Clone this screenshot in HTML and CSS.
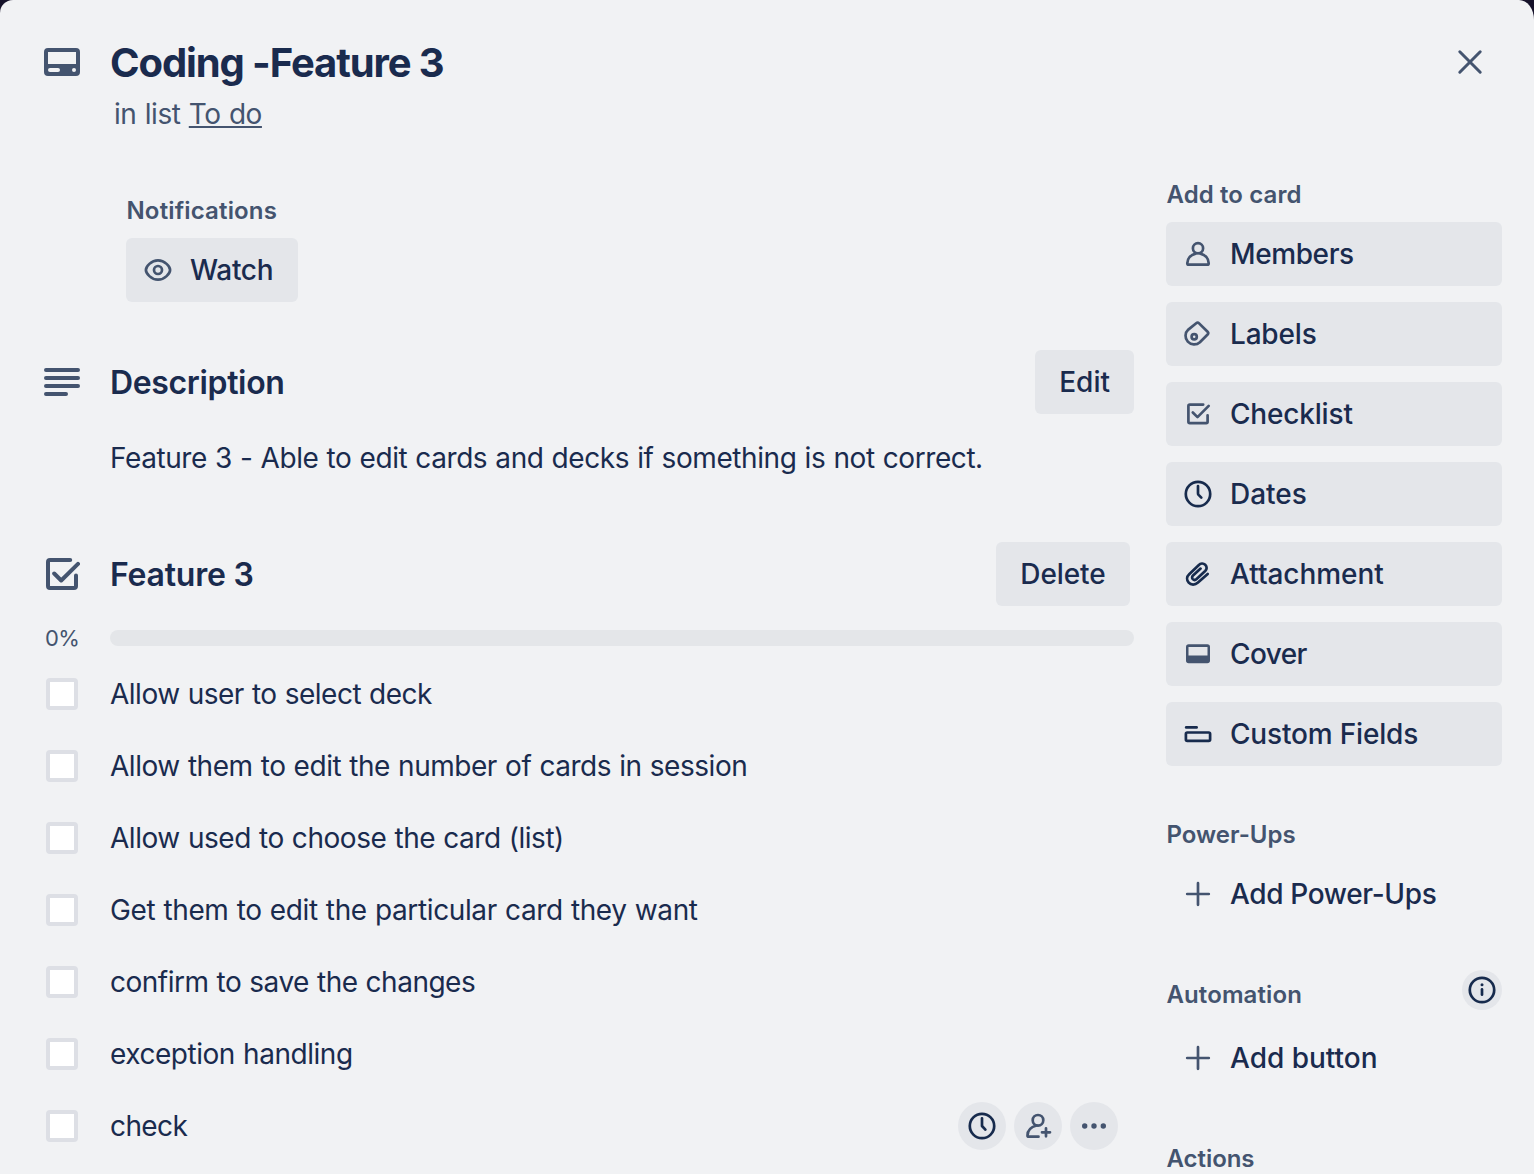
FILE: index.html
```html
<!DOCTYPE html>
<html lang="en">
<head>
<meta charset="utf-8">
<title>Coding -Feature 3</title>
<link rel="stylesheet" href="styles.css">
</head>
<body>
<main class="dialog">
  <header class="header">
    <svg class="head-icon" width="36" height="36" viewBox="0 0 36 36"><path fill="currentColor" fill-rule="evenodd" d="M4 4h28a4 4 0 0 1 4 4v20a4 4 0 0 1-4 4H4a4 4 0 0 1-4-4V8a4 4 0 0 1 4-4zM4 8v12h28V8zM6 24a2 2 0 0 0 0 4h8a2 2 0 0 0 0-4zM30 24a2 2 0 0 0 0 4a2 2 0 0 0 0-4z"/></svg>
    <div class="heading">
      <h1 class="title">Coding -Feature 3</h1>
      <p class="subtitle">in list <a class="list-link">To do</a></p>
    </div>
    <svg class="close" width="32" height="32" viewBox="0 0 32 32"><path class="s3" d="M5.800 5.800l20.400 20.400M26.200 5.800L5.800 26.200"/></svg>
  </header>

  <div class="columns">
    <div class="content">
      <section class="notifications">
        <h3 class="label">Notifications</h3>
        <button class="btn watch">
          <svg width="32" height="32" viewBox="0 0 32 32"><path class="s" d="M3.900 16C3.900 12.600 9.200 6.300 16 6.300S28.100 12.600 28.100 16S22.800 25.700 16 25.700S3.900 19.400 3.900 16z"/><circle class="s" cx="16" cy="16" r="4"/></svg>
          <span class="watch-text">Watch</span>
        </button>
      </section>

      <section class="section-head">
        <svg width="36" height="36" viewBox="0 0 36 36"><path class="s4" d="M2 6h32M2 14h32M2 22h32M2 30h20"/></svg>
        <h2 class="section-title description-title">Description</h2>
        <button class="btn">Edit</button>
      </section>
      <p class="description">Feature 3 - Able to edit cards and decks if something is not correct.</p>

      <section class="section-head checklist-head">
        <svg width="36" height="36" viewBox="0 0 36 36"><path class="s4" d="M26.200 4H6a2 2 0 0 0-2 2v24a2 2 0 0 0 2 2h24a2 2 0 0 0 2-2V19.500M10.200 17.500l7 7L34 7.800"/></svg>
        <h2 class="section-title">Feature 3</h2>
        <button class="btn delete">Delete</button>
      </section>
      <div class="progress"><span class="percent">0%</span><div class="track"></div></div>
      <ul class="items">
        <li class="item"><span class="box"></span><span class="t1">Allow user to select deck</span></li>
        <li class="item"><span class="box"></span><span>Allow them to edit the number of cards in session</span></li>
        <li class="item"><span class="box"></span><span>Allow used to choose the card (list)</span></li>
        <li class="item"><span class="box"></span><span class="t2">Get them to edit the particular card they want</span></li>
        <li class="item"><span class="box"></span><span class="t1">confirm to save the changes</span></li>
        <li class="item"><span class="box"></span><span>exception handling</span></li>
        <li class="item"><span class="box"></span><span class="t3">check</span>
          <div class="tools">
            <span class="tool dark"><svg width="32" height="32" viewBox="0 0 32 32"><circle class="s" cx="16" cy="16" r="12.200"/><path class="s" d="M16 8.300V16l3.400 3.600"/></svg></span>
            <span class="tool"><svg width="48" height="48" viewBox="0 0 48 48"><circle class="s" cx="24" cy="18.300" r="5.300"/><path class="s" d="M22.500 23.500C17 25 13.500 28.500 13.500 33.400q0 1.300 1.300 1.300H24.500M32 26.300v8M28 30.300h8"/></svg></span>
            <span class="tool"><svg width="48" height="48" viewBox="0 0 48 48" fill="currentColor"><circle cx="14.700" cy="24" r="2.700"/><circle cx="24" cy="24" r="2.700"/><circle cx="33.300" cy="24" r="2.700"/></svg></span>
          </div>
        </li>
      </ul>
    </div>

    <aside class="sidebar">
      <h3 class="label">Add to card</h3>
      <div class="actions">
        <button class="btn side"><svg width="32" height="32" viewBox="0 0 32 32"><circle class="s" cx="16" cy="10.200" r="5.100"/><path class="s" d="M13.600 15.600C8.600 16.800 5.300 20.700 5.300 25.200q0 1.500 1.500 1.500H25.200q1.500 0 1.500-1.500C26.700 20.700 23.400 16.800 18.400 15.600"/></svg><span class="w4">Members</span></button>
        <button class="btn side"><svg width="32" height="32" viewBox="0 0 32 32"><path class="s" d="M6.300 11.600L14.200 5.200q1.500-1.200 2.900.2l8.500 8.300q1.300 1.400 0 2.800L17.900 24.200A8.400 8.400 0 0 1 6.300 11.600z"/><circle class="s" cx="12.200" cy="18.700" r="2.600"/></svg><span class="w2">Labels</span></button>
        <button class="btn side"><svg width="32" height="32" viewBox="0 0 32 32"><path class="s" d="M21.200 6.600H7.800q-1.400 0-1.400 1.400v15.800q0 1.400 1.400 1.400h16.400q1.400 0 1.400-1.400V17.300M10.800 14.500l4.700 4.600L26.700 7.900"/></svg><span class="w2">Checklist</span></button>
        <button class="btn side dark"><svg width="32" height="32" viewBox="0 0 32 32"><circle class="s" cx="16" cy="16" r="12.200"/><path class="s" d="M16 8v7.200q0 1 .6 1.700l2.700 2.700"/></svg><span>Dates</span></button>
        <button class="btn side dark"><svg width="32" height="32" viewBox="0 0 32 32"><path class="s" d="M25.700 16L16 24.600C13 27.200 9 27.200 6.700 24.600C4.400 22 4.600 18.600 7.200 16.200L16.600 7.200C18.600 5.300 21.300 5 23.200 6.800C25.200 8.700 25 11.200 23.200 13L14.600 21C13.400 22.100 11.800 22.100 10.800 21.100C9.800 20 9.900 18.600 11 17.600L18.600 10.600"/></svg><span class="w1">Attachment</span></button>
        <button class="btn side"><svg width="32" height="32" viewBox="0 0 32 32"><path fill="currentColor" fill-rule="evenodd" d="M6.700 6.300h18.600a2.700 2.700 0 0 1 2.700 2.700v13.600a2.700 2.700 0 0 1-2.700 2.700H6.700a2.700 2.700 0 0 1-2.700-2.700V9a2.700 2.700 0 0 1 2.700-2.700zM6.500 9v8.400h19V9z"/></svg><span class="w5">Cover</span></button>
        <button class="btn side dark"><svg width="32" height="32" viewBox="0 0 32 32"><path class="s" d="M4.200 9.400h10.400"/><rect class="s" x="3.900" y="14.500" width="24.200" height="8.300" rx="1.400"/></svg><span class="w2">Custom Fields</span></button>
      </div>
      <h3 class="label powerups">Power-Ups</h3>
      <button class="btn side plain"><svg width="32" height="32" viewBox="0 0 32 32"><path class="s2" d="M16 5.200v21.600M5.200 16h21.600"/></svg><span class="w6">Add Power-Ups</span></button>
      <div class="automation">
        <h3 class="label">Automation</h3>
        <span class="info"><svg width="32" height="32" viewBox="0 0 32 32"><circle class="s" cx="16" cy="16" r="12.200"/><path class="s" d="M16 15.400v5.300"/><circle cx="16" cy="10.800" r="1.500" fill="currentColor"/></svg></span>
      </div>
      <button class="btn side plain"><svg width="32" height="32" viewBox="0 0 32 32"><path class="s2" d="M16 5.200v21.600M5.200 16h21.600"/></svg><span>Add button</span></button>
      <h3 class="label more">Actions</h3>
    </aside>
  </div>
</main>
</body>
</html>
```
FILE: styles.css
```css
* { box-sizing: border-box; }

body {
  margin: 0;
  height: 1174px;
  overflow: hidden;
  background: #16122a;
  color: #1a2b4e;
  font-family: Inter, "Liberation Sans", sans-serif;
  font-size: 28px;
}

h1, h2, h3, p, ul { margin: 0; padding: 0; font-weight: 400; }
svg { display: block; flex: none; color: #44546f; }

.s, .s2, .s3, .s4 {
  fill: none;
  stroke: currentColor;
  stroke-width: 2.7;
  stroke-linecap: round;
  stroke-linejoin: round;
}
.s .s2 { stroke-width: 2.4; }
.s3 { stroke-width: 3; }
.s4 { stroke-width: 4; }

.dialog {
  height: 1174px;
  overflow: hidden;
  padding: 38px 32px 0 44px;
  background: #f1f2f4;
  border-radius: 13px 15px 0 0 / 13px 20px 0 0;
}

.header { display: flex; align-items: flex-start; height: 144px; }
.head-icon { margin-top: 6px; }
.heading { flex: 1; margin-left: 30px; }
.title { font-size: 40px; font-weight: 650; line-height: 50px; letter-spacing: -1.1px; }
.subtitle { margin: 10px 0 0 4px; line-height: 33px; color: #44546f; letter-spacing: -0.45px; word-spacing: 0.9px; }
.list-link { text-decoration: underline; text-decoration-thickness: 2px; text-underline-offset: 2px; text-decoration-skip-ink: none; }
.close { margin: 8px 16px 0 0; }

.columns { display: flex; gap: 32px; }
.content { width: 1090px; padding-top: 16px; }
.sidebar { width: 336px; }

.label { font-size: 24px; font-weight: 600; line-height: 25px; letter-spacing: 0.1px; color: #44546f; padding-left: 0.5px; }
.notifications { padding-left: 82px; }
.notifications .label { line-height: 25px; margin-bottom: 15px; letter-spacing: 0.15px; }

.btn {
  display: flex;
  align-items: center;
  justify-content: center;
  height: 64px;
  padding: 0 24px;
  border: 0;
  border-radius: 6px;
  background: #e4e6ea;
  color: #1a2b4e;
  font: 500 28px Inter, "Liberation Sans", sans-serif;
}
.watch { width: 172px; padding: 0 16px; justify-content: flex-start; gap: 16px; }
.watch-text { letter-spacing: -0.3px; }

.section-head { display: flex; align-items: center; margin-top: 48px; }
.section-title { flex: 1; margin-left: 30px; font-size: 32px; font-weight: 600; line-height: 40px; padding-top: 1px; letter-spacing: -0.22px; }
.description-title { letter-spacing: -0.35px; }
.description { margin: 24px 0 0 66px; line-height: 40px; letter-spacing: -0.42px; word-spacing: 0.65px; }
.checklist-head { margin-top: 64px; }
.delete { width: 134px; margin-right: 4px; letter-spacing: -0.1px; }

.progress { display: flex; align-items: center; margin-top: 24px; height: 16px; }
.percent { width: 66px; padding-left: 1px; font-size: 22px; line-height: 16px; letter-spacing: -0.6px; color: #44546f; }
.track { flex: 1; height: 16px; border-radius: 8px; background: #e4e6e9; }

.items { list-style: none; margin-top: 12px; }
.item { display: flex; align-items: center; height: 72px; letter-spacing: -0.46px; word-spacing: 0.7px; }
.box { width: 32px; height: 32px; margin: 0 32px 0 2px; border: 4px solid #dddfe5; border-radius: 4px; background: #fff; }
.t1 { letter-spacing: -0.5px; }
.t2 { letter-spacing: -0.38px; }
.t3 { letter-spacing: -0.6px; }
.tools { display: flex; gap: 8px; margin: 0 16px 0 auto; }
.tool, .info { display: flex; align-items: center; justify-content: center; width: 48px; height: 48px; border-radius: 50%; background: #e4e6ea; }
.dark svg, .info svg { color: #172b4d; }

.actions { display: flex; flex-direction: column; gap: 16px; margin-top: 15px; }
.side { width: 100%; padding: 0 16px; justify-content: flex-start; gap: 16px; }
.plain { background: none; }
.w1 { letter-spacing: -0.05px; }
.w2 { letter-spacing: -0.18px; }
.w4 { letter-spacing: -0.4px; }
.w5 { letter-spacing: -0.6px; }
.w6 { letter-spacing: -0.35px; }
.powerups { margin: 56px 0 15px; letter-spacing: 0; }
.automation { display: flex; justify-content: space-between; margin: 44px 0 16px; }
.automation .label { margin-top: 12px; }
.info { width: 40px; height: 40px; }
.more { margin-top: 56px; letter-spacing: -0.05px; }
```
